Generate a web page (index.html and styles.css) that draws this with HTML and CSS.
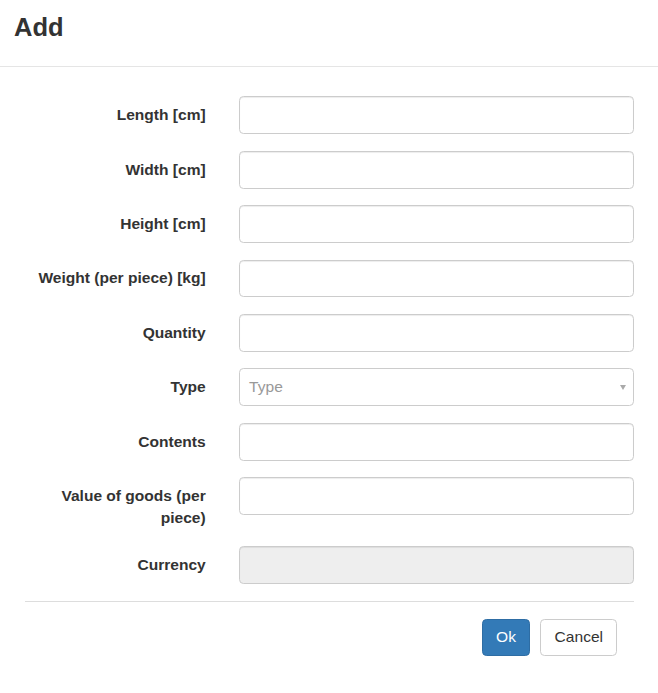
FILE: index.html
```html
<!DOCTYPE html>
<html>
<head>
<meta charset="utf-8">
<title>Add</title>
<link rel="stylesheet" href="styles.css">
</head>
<body>
<div class="modal">
  <div class="modal-header">
    <h3 class="modal-title">Add</h3>
  </div>
  <div class="modal-body">
    <form class="form">
      <div class="form-group">
        <label class="control-label">Length [cm]</label>
        <div class="field"><input class="form-control" type="text"></div>
      </div>
      <div class="form-group">
        <label class="control-label">Width [cm]</label>
        <div class="field"><input class="form-control" type="text"></div>
      </div>
      <div class="form-group">
        <label class="control-label">Height [cm]</label>
        <div class="field"><input class="form-control" type="text"></div>
      </div>
      <div class="form-group">
        <label class="control-label">Weight (per piece) [kg]</label>
        <div class="field"><input class="form-control" type="text"></div>
      </div>
      <div class="form-group">
        <label class="control-label">Quantity</label>
        <div class="field"><input class="form-control" type="text"></div>
      </div>
      <div class="form-group">
        <label class="control-label">Type</label>
        <div class="field">
          <div class="select-box">
            <span class="select-placeholder">Type</span>
            <span class="select-caret"></span>
          </div>
        </div>
      </div>
      <div class="form-group">
        <label class="control-label">Contents</label>
        <div class="field"><input class="form-control" type="text"></div>
      </div>
      <div class="form-group">
        <label class="control-label">Value of goods (per piece)</label>
        <div class="field"><input class="form-control" type="text"></div>
      </div>
      <div class="form-group">
        <label class="control-label">Currency</label>
        <div class="field"><input class="form-control" type="text" disabled></div>
      </div>
    </form>
    <div class="modal-footer">
      <button class="btn btn-primary" type="button">Ok</button>
      <button class="btn btn-default" type="button">Cancel</button>
    </div>
  </div>
</div>
</body>
</html>
```

FILE: styles.css
```css
html, body {
  margin: 0;
  padding: 0;
  background: #fff;
}

body {
  font-family: "Liberation Sans", Arial, sans-serif;
  font-size: 15.55px;
  line-height: 22.2px;
  color: #333;
}

.modal {
  width: 658px;
}

.modal-header {
  padding: 12.5px 14px 24.5px 14px;
  border-bottom: 1px solid #e5e5e5;
}

.modal-title {
  margin: 0;
  font-size: 25.5px;
  line-height: 29.33px;
  font-weight: bold;
  color: #333;
}

.modal-body {
  padding: 29px 24px 0 25px;
}

.form {
  display: flex;
  flex-direction: column;
}

.form-group {
  display: grid;
  grid-template-columns: 180.7px 1fr;
  column-gap: 33.4px;
  margin-bottom: 16.67px;
}

.control-label {
  display: block;
  text-align: right;
  font-weight: bold;
  padding-top: 7.78px;
}

.field {
  min-width: 0;
}

.form-control {
  display: block;
  box-sizing: border-box;
  width: 100%;
  height: 37.78px;
  margin: 0;
  padding: 6.67px 13.33px;
  font-family: inherit;
  font-size: 15.55px;
  line-height: 22.2px;
  color: #555;
  background: #fff;
  border: 1px solid #ccc;
  border-radius: 4.44px;
  box-shadow: inset 0 1px 1px rgba(0, 0, 0, 0.075);
  outline: none;
}

.form-control[disabled] {
  background: #eee;
}

.select-box {
  box-sizing: border-box;
  height: 37.78px;
  border: 1px solid #ccc;
  border-radius: 4.44px;
  background: #fff;
  display: flex;
  align-items: center;
  justify-content: space-between;
  padding: 0 7px 0 9px;
}

.select-placeholder {
  color: #999;
}

.select-caret {
  width: 0;
  height: 0;
  border-left: 3.5px solid transparent;
  border-right: 3.5px solid transparent;
  border-top: 5px solid #aaa;
}

.modal-footer {
  border-top: 1px solid #ddd;
  padding: 17px 16.67px 20px 0;
  display: flex;
  justify-content: flex-end;
  gap: 10px;
}

.btn {
  box-sizing: border-box;
  height: 37.78px;
  padding: 6.67px 13.33px;
  font-family: inherit;
  font-size: 15.55px;
  line-height: 22.2px;
  border: 1px solid transparent;
  border-radius: 4.44px;
  cursor: pointer;
  margin: 0;
}

.btn-primary {
  color: #fff;
  background: #337ab7;
  border-color: #2e6da4;
}

.btn-default {
  color: #333;
  background: #fff;
  border-color: #ccc;
}
```
